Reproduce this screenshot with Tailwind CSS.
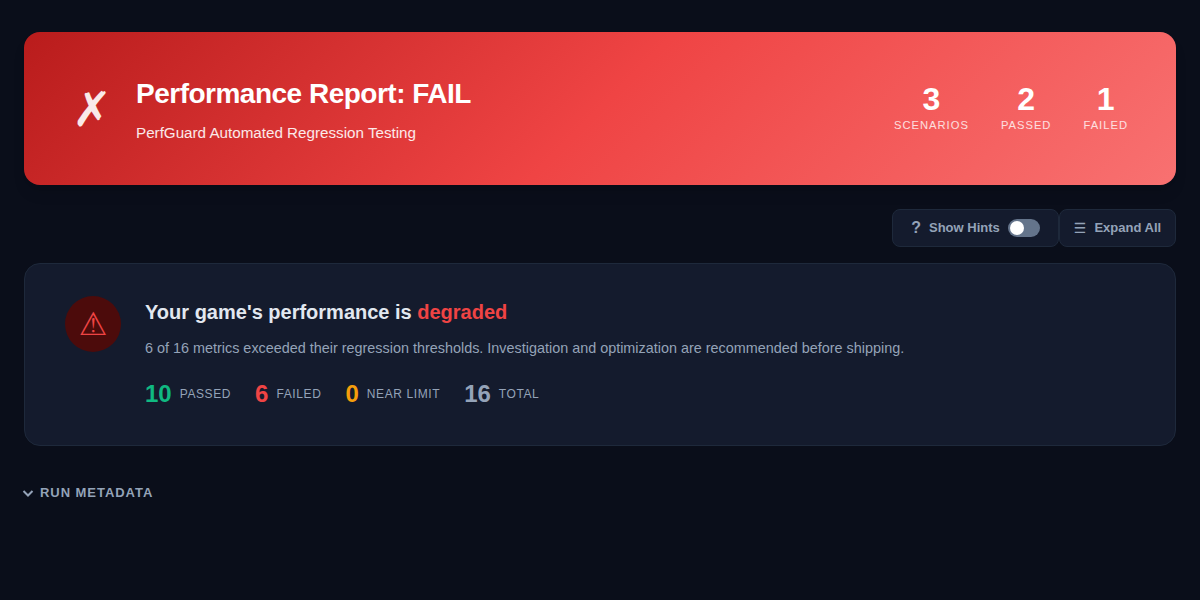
<!DOCTYPE html>
<html lang="en">
<head>
    <meta charset="UTF-8">
    <title>Performance Report</title>
    <script src="https://cdn.jsdelivr.net/npm/@tailwindcss/browser@4"></script>
</head>
<body class="bg-[#0a0e1a] font-['Liberation_Sans',Arial,sans-serif] w-[1200px] h-[600px] overflow-hidden">
    <main class="px-6 pt-8">
        <!-- banner -->
        <header class="h-[153px] rounded-2xl bg-[linear-gradient(135deg,#b91c1c_0%,#ef4444_50%,#f87171_100%)] pl-12 pr-12 flex items-center justify-between shadow-lg">
            <div class="flex items-center gap-6">
                <div class="text-[48px] leading-none text-white/90 font-['DejaVu_Sans',sans-serif] w-[40px] text-center">✗</div>
                <div class="pt-[2px]">
                    <h1 class="text-[28px] leading-[36px] font-bold text-white tracking-[-0.5px]">Performance Report: FAIL</h1>
                    <p class="mt-[10px] text-[15.2px] leading-[22px] text-white/90">PerfGuard Automated Regression Testing</p>
                </div>
            </div>
            <div class="flex gap-8 pb-1">
                <div class="text-center">
                    <div class="text-[32px] leading-[36px] font-bold text-white">3</div>
                    <div class="text-[11.2px] leading-[16px] tracking-[1px] text-white/80 uppercase">Scenarios</div>
                </div>
                <div class="text-center">
                    <div class="text-[32px] leading-[36px] font-bold text-white">2</div>
                    <div class="text-[11.2px] leading-[16px] tracking-[1px] text-white/80 uppercase">Passed</div>
                </div>
                <div class="text-center">
                    <div class="text-[32px] leading-[36px] font-bold text-white">1</div>
                    <div class="text-[11.2px] leading-[16px] tracking-[1px] text-white/80 uppercase">Failed</div>
                </div>
            </div>
        </header>

        <!-- toolbar -->
        <div class="mt-6 flex justify-end">
            <button class="h-[38px] w-[167px] flex items-center justify-center gap-2 rounded-lg border border-[#1e293b] bg-[#141b2d] text-[13px] font-semibold text-[#94a3b8]">
                <span class="text-[16px] font-bold">?</span>
                <span>Show Hints</span>
                <span class="relative w-8 h-[18px] rounded-full bg-[#64748b]">
                    <span class="absolute left-0.5 top-0.5 w-3.5 h-3.5 rounded-full bg-white"></span>
                </span>
            </button>
            <button class="h-[38px] w-[117px] flex items-center justify-center gap-2 rounded-lg border border-[#1e293b] bg-[#141b2d] text-[13px] font-semibold text-[#94a3b8]">
                <span class="font-['DejaVu_Sans',sans-serif] text-[14px] font-bold">☰</span>
                <span>Expand All</span>
            </button>
        </div>

        <!-- summary -->
        <section class="mt-4 h-[183px] rounded-2xl border border-[#1e293b] bg-[#141b2d] px-10 pt-8 flex gap-6">
            <div class="w-14 h-14 shrink-0 rounded-full bg-[#4c0b0b] flex items-center justify-center font-['DejaVu_Sans',sans-serif] text-[32px] leading-none text-[#ef4444]">⚠</div>
            <div>
                <h2 class="mt-[2px] text-[20px] leading-[28px] font-semibold text-[#e2e8f0]">Your game's performance is <span class="text-[#ef4444]">degraded</span></h2>
                <p class="mt-[10px] text-[14.4px] leading-[24px] text-[#94a3b8]">6 of 16 metrics exceeded their regression thresholds. Investigation and optimization are recommended before shipping.</p>
                <div class="mt-[20px] flex gap-6">
                    <div class="flex items-center gap-2"><span class="text-[24px] leading-[28px] font-bold text-[#10b981]">10</span><span class="text-[12px] tracking-[0.6px] text-[#94a3b8] uppercase">Passed</span></div>
                    <div class="flex items-center gap-2"><span class="text-[24px] leading-[28px] font-bold text-[#ef4444]">6</span><span class="text-[12px] tracking-[0.6px] text-[#94a3b8] uppercase">Failed</span></div>
                    <div class="flex items-center gap-2"><span class="text-[24px] leading-[28px] font-bold text-[#f59e0b]">0</span><span class="text-[12px] tracking-[0.6px] text-[#94a3b8] uppercase">Near Limit</span></div>
                    <div class="flex items-center gap-2"><span class="text-[24px] leading-[28px] font-bold text-[#94a3b8]">16</span><span class="text-[12px] tracking-[0.6px] text-[#94a3b8] uppercase">Total</span></div>
                </div>
            </div>
        </section>

        <!-- metadata -->
        <div class="mt-[38px] -ml-[2px] flex items-center gap-[6px]">
            <svg width="12" height="12" viewBox="0 0 12 12" fill="none" stroke="#94a3b8" stroke-width="2"><path d="M1.5 4 L6 8.5 L10.5 4"/></svg>
            <span class="text-[13px] leading-[18px] font-bold tracking-[0.95px] text-[#94a3b8] uppercase">Run Metadata</span>
        </div>
    </main>
</body>
</html>
